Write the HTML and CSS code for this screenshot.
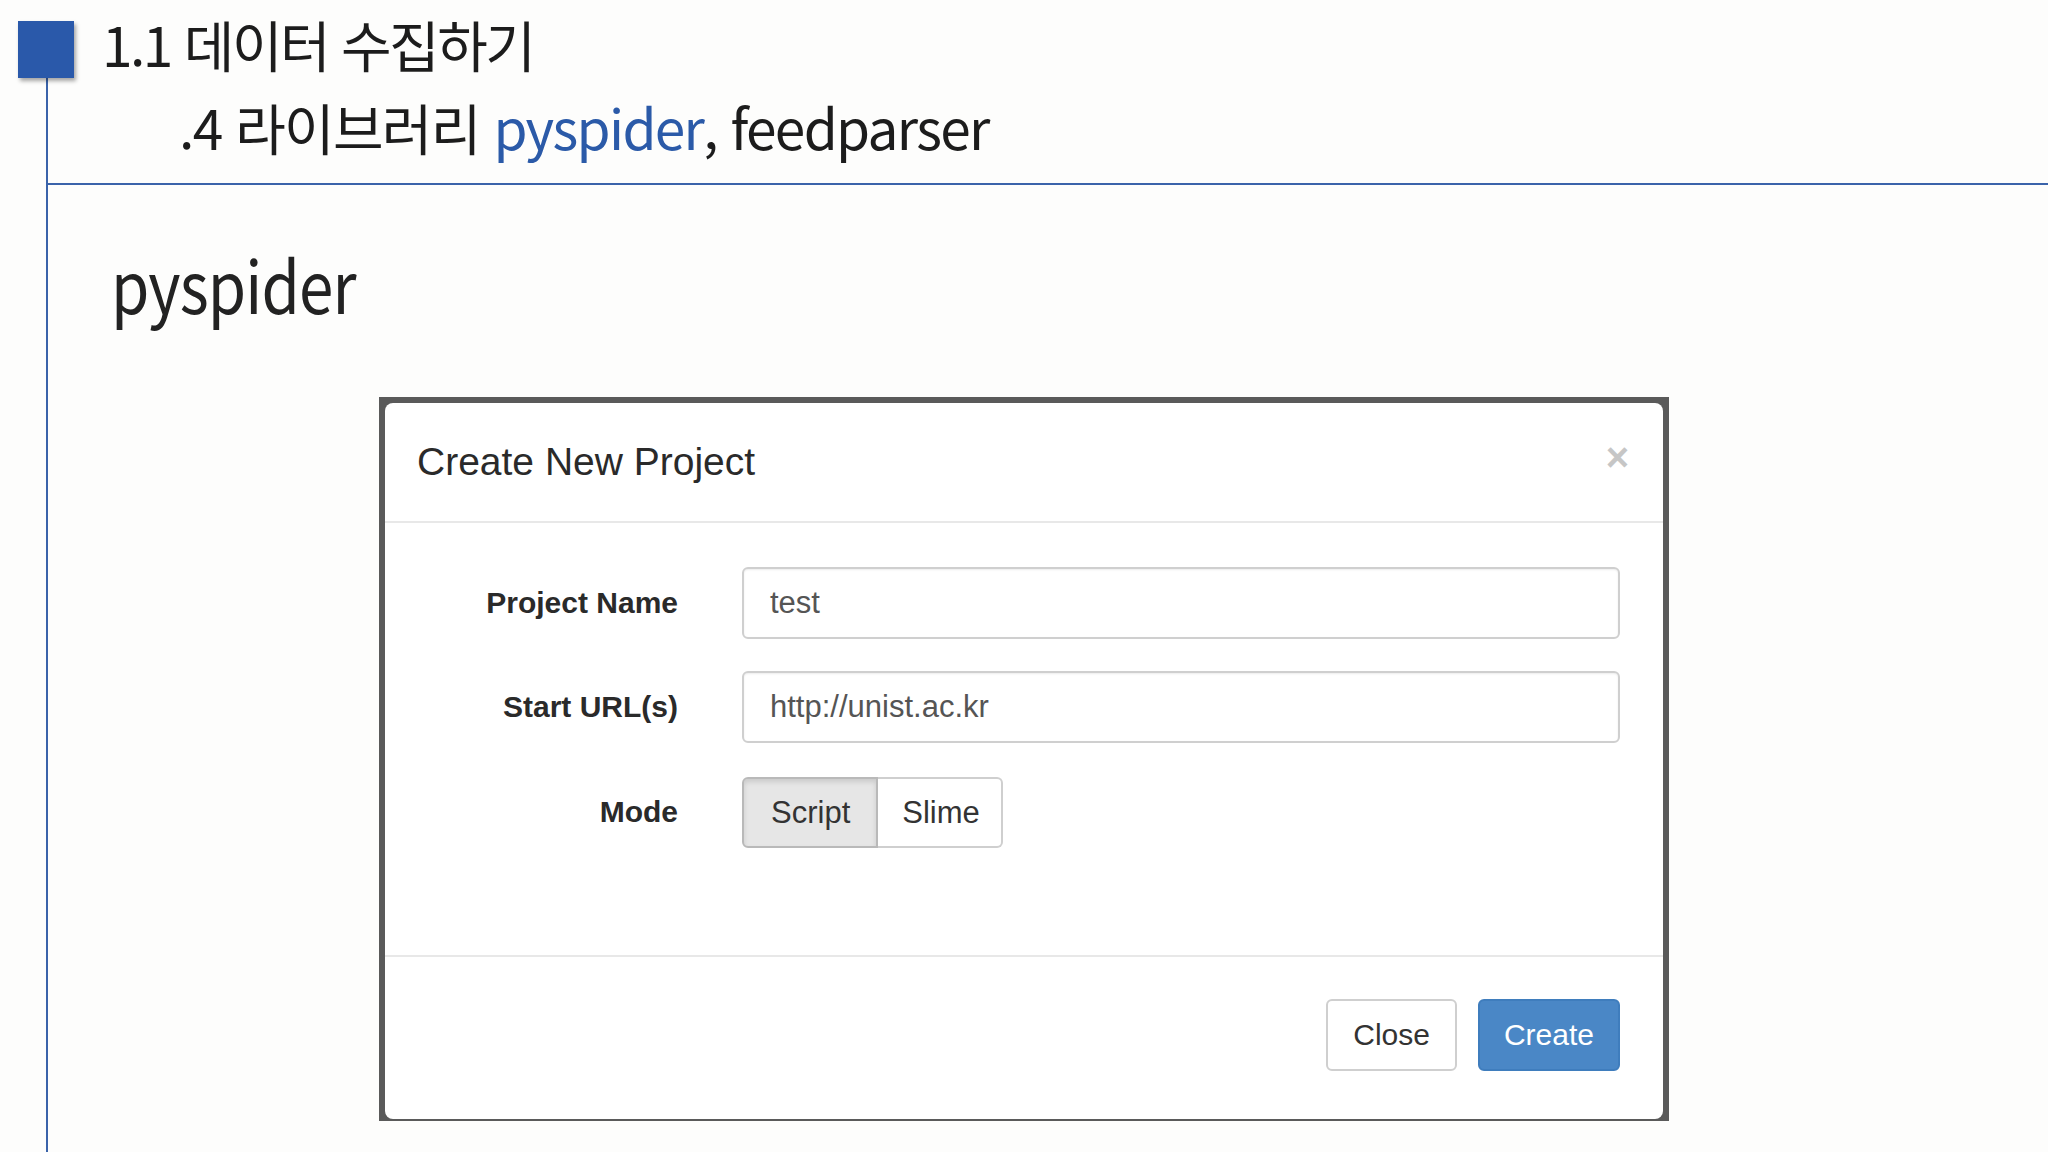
FILE: index.html
```html
<!DOCTYPE html>
<html lang="ko">
<head>
    <meta charset="UTF-8">
    <meta name="viewport" content="width=device-width, initial-scale=1.0">
    <title>1.1 데이터 수집하기</title>
    <link rel="stylesheet" href="styles.css">
</head>
<body>
    <div class="top">
        <div class="marker"></div>
        <h1 class="title">1.1 데이터 수집하기</h1>
    </div>
    <div class="content">
        <h2 class="subtitle">.4 라이브러리 <span class="hl">pyspider</span>, feedparser</h2>
        <h3 class="heading">pyspider</h3>

        <div class="shot">
            <div class="modal">
                <div class="modal-header">
                    <span class="modal-title">Create New Project</span>
                    <span class="close-x">&times;</span>
                </div>
                <div class="modal-body">
                    <label class="field-label">Project Name</label>
                    <div class="field-input">test</div>
                    <label class="field-label">Start URL(s)</label>
                    <div class="field-input">http://unist.ac.kr</div>
                    <label class="field-label">Mode</label>
                    <div class="btn-group">
                        <div class="seg active">Script</div>
                        <div class="seg">Slime</div>
                    </div>
                </div>
                <div class="modal-footer">
                    <div class="btn">Close</div>
                    <div class="btn btn-primary">Create</div>
                </div>
            </div>
        </div>
    </div>
</body>
</html>
```

FILE: styles.css
```css
body {
    margin: 0;
    background-color: #fdfdfc;
    font-family: "Noto Sans CJK KR", sans-serif;
    color: #1c1c1c;
    overflow: hidden;
}

.top {
    display: flex;
    align-items: flex-start;
    height: 78px;
}

.marker {
    width: 56px;
    height: 57px;
    margin: 21px 0 0 18px;
    background-color: #2a59aa;
    box-shadow: 2px 3px 4px rgba(0, 0, 0, 0.35);
    flex: none;
}

.title {
    margin: 8px 0 0 28px;
    font-size: 55px;
    font-weight: 400;
    line-height: 1.3;
    letter-spacing: -2.5px;
}

.content {
    margin-left: 46px;
    border-left: 2px solid #3a63aa;
    height: 1074px;
}

.subtitle {
    margin: 0;
    height: 105px;
    padding-left: 131px;
    border-bottom: 2px solid #3a63aa;
    font-size: 55px;
    font-weight: 400;
    line-height: 1.75;
    letter-spacing: -1.7px;
}

.hl {
    color: #2b5aa8;
}

.heading {
    margin: 62px 0 0 63px;
    height: 100px;
    font-family: "Noto Sans CJK KR", sans-serif;
    font-size: 72px;
    font-weight: 400;
    line-height: 1;
    letter-spacing: -1px;
    color: #222;
    transform: scaleX(0.86);
    transform-origin: left center;
}

/* screenshot of the pyspider dialog */
.shot {
    width: 1278px;
    height: 716px;
    margin: 50px 0 0 331px;
    padding: 6px 6px 2px 6px;
    background-color: #5a5a5a;
    font-family: "Liberation Sans", Arial, sans-serif;
}

.modal {
    height: 100%;
    background-color: #fff;
    border-radius: 8px;
    display: flex;
    flex-direction: column;
}

.modal-header {
    height: 118px;
    padding: 0 34px 0 32px;
    display: flex;
    justify-content: space-between;
    align-items: center;
    border-bottom: 2px solid #e8e8e8;
}

.modal-title {
    font-size: 39px;
    color: #2a2a2a;
}

.close-x {
    font-size: 40px;
    font-weight: bold;
    color: #c6c6c6;
    margin-top: -10px;
}

.modal-body {
    display: grid;
    grid-template-columns: 293px 1fr;
    column-gap: 64px;
    row-gap: 32px;
    align-items: center;
    align-content: start;
    padding: 44px 43px 0 0;
    flex: 1;
    border-bottom: 2px solid #e8e8e8;
}

.field-label {
    text-align: right;
    font-size: 30px;
    font-weight: bold;
    color: #2a2a2a;
}

.field-input {
    height: 68px;
    line-height: 68px;
    padding-left: 26px;
    border: 2px solid #cfcfcf;
    border-radius: 6px;
    font-size: 31px;
    color: #555;
    box-shadow: inset 0 1px 2px rgba(0, 0, 0, 0.08);
}

.btn-group {
    display: flex;
    margin-top: 2px;
}

.seg {
    height: 67px;
    line-height: 67px;
    padding: 0 26px 0 27px;
    border: 2px solid #cfcfcf;
    font-size: 31px;
    color: #333;
    background-color: #fff;
}

.seg:first-child {
    border-radius: 6px 0 0 6px;
}

.seg:last-child {
    border-left: none;
    border-radius: 0 6px 6px 0;
    padding: 0 21px 0 24px;
}

.seg.active {
    background-color: #e6e6e6;
    border-color: #b9b9b9;
    box-shadow: inset 0 3px 5px rgba(0, 0, 0, 0.12);
}

.modal-footer {
    height: 162px;
    padding: 42px 43px 0 0;
    box-sizing: border-box;
    display: flex;
    justify-content: flex-end;
    align-items: flex-start;
    gap: 21px;
    flex: none;
}

.btn {
    height: 68px;
    line-height: 68px;
    padding: 0 25px;
    border: 2px solid #cfcfcf;
    border-radius: 6px;
    font-size: 30px;
    color: #333;
    background-color: #fff;
}

.btn-primary {
    background-color: #4a87c6;
    border-color: #3f7dbd;
    color: #fff;
    padding: 0 24px;
}
```
